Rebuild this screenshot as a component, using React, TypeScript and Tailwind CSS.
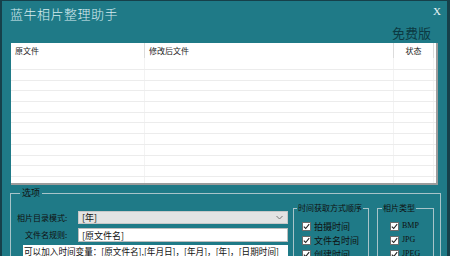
import React from 'react';

const rows = Array.from({ length: 12 });

const Check = () => (
  <span className="w-[9px] h-[9px] bg-white border border-[#6b6b6b] flex items-center justify-center shrink-0">
    <svg width="7" height="7" viewBox="0 0 7 7">
      <path d="M0.8 3.6 L2.7 5.5 L6.2 1.2" fill="none" stroke="#222" strokeWidth="1.1" />
    </svg>
  </span>
);

const CheckRow = ({ label, latin }: { label: string; latin?: boolean }) => (
  <div className="flex items-center gap-[3px] h-[14px] whitespace-nowrap">
    <Check />
    <span
      className={`text-[#101010] leading-none ${latin ? 'text-[8px]' : 'text-[9px]'}`}
      style={latin ? { fontFamily: '"Liberation Serif", serif' } : undefined}
    >
      {label}
    </span>
  </div>
);

const App: React.FC = () => {
  return (
    <div
      className="w-[450px] h-[256px] overflow-hidden bg-[#1f7a87] border-l-2 border-t border-r-[3px] border-[#16404a] flex flex-col"
      style={{ fontFamily: '"Noto Sans CJK SC", "Noto Sans", sans-serif' }}
    >
      {/* title bar */}
      <div className="h-[42px] flex justify-between shrink-0">
        <div className="pl-[8px] pt-[4px] text-[13px] leading-[18px] font-light text-[#d6ecf0] tracking-[0.5px]">
          蓝牛相片整理助手
        </div>
        <div className="flex flex-col items-end pr-[6px]">
          <span
            className="text-[11px] leading-none text-[#e8f4f6] pt-[5px]"
            style={{ fontFamily: '"Liberation Serif", serif' }}
          >
            X
          </span>
          <span className="text-[13px] leading-[16px] text-[#0c3a43] mt-[8px] pr-[10px]">免费版</span>
        </div>
      </div>

      {/* file table */}
      <div className="mx-[9px] h-[142px] bg-white border-r-2 border-b-2 border-[#9c9c9c] shrink-0 flex flex-col overflow-hidden text-[8px] text-[#222]">
        <div className="h-[15px] flex shrink-0">
          <div className="w-[134px] pl-[4px] flex items-center border-r border-[#dcdcdc]">原文件</div>
          <div className="w-[249px] pl-[4px] flex items-center border-r border-[#dcdcdc]">修改后文件</div>
          <div className="w-[40px] flex items-center justify-center border-r border-[#dcdcdc]">状态</div>
          <div className="flex-1" />
        </div>
        <div className="h-[11px] flex shrink-0">
          <div className="w-[134px] border-r border-[#f3f3f3]" />
          <div className="w-[249px] border-r border-[#f3f3f3]" />
          <div className="w-[40px] border-r border-[#f3f3f3]" />
        </div>
        {rows.map((_, i) => (
          <div key={i} className="h-[10.7px] flex shrink-0 border-t border-[#ececec]">
            <div className="w-[134px] border-r border-[#f3f3f3]" />
            <div className="w-[249px] border-r border-[#f3f3f3]" />
            <div className="w-[40px] border-r border-[#f3f3f3]" />
          </div>
        ))}
      </div>

      {/* options */}
      <fieldset className="mx-[8px] mt-[3px] border border-[#a8c4c9] px-[6px] flex-1">
        <legend className="text-[9px] leading-[10px] text-[#101010] px-[2px] ml-[3px]">选项</legend>
        <div className="flex">
          <div className="w-[271px] pt-[13px] flex flex-col text-[8px] text-[#101010] whitespace-nowrap">
            <div className="flex items-center h-[13px]">
              <span className="w-[61px] leading-none">相片目录模式:</span>
              <div className="flex-1 h-[13px] bg-[#e3e3e3] border border-[#c8c8c8] flex items-center justify-between pl-[3px] pr-[4px]">
                <span className="text-[9px] leading-none">[年]</span>
                <svg width="7" height="5" viewBox="0 0 7 5">
                  <path d="M0.5 1 L3.5 4 L6.5 1" fill="none" stroke="#777" strokeWidth="1" />
                </svg>
              </div>
            </div>
            <div className="flex items-center h-[14px] mt-[4px]">
              <span className="w-[61px] leading-none pl-[8px]">文件名规则:</span>
              <div className="flex-1 h-[14px] bg-white border border-[#bdbdbd] flex items-center pl-[3px]">
                <span className="text-[9px] leading-none">[原文件名]</span>
              </div>
            </div>
            <div className="flex items-center h-[13px] mt-[3px] ml-[6px] pl-[1px] bg-white text-[8.6px] leading-none overflow-hidden">
              可以加入时间变量：[原文件名],[年月日]，[年月]，[年]，[日期时间]
            </div>
          </div>
          <div className="flex gap-[8px] ml-[5px] mt-[5px]">
            <fieldset className="w-[76px] border border-[#a8c4c9] pl-[8px] pt-[6px]">
              <legend className="text-[8px] leading-[10px] text-[#101010] px-[1px] -ml-[5px] whitespace-nowrap">时间获取方式顺序</legend>
              <CheckRow label="拍摄时间" />
              <CheckRow label="文件名时间" />
              <CheckRow label="创建时间" />
            </fieldset>
            <fieldset className="w-[57px] border border-[#a8c4c9] pl-[12px] pt-[6px]">
              <legend className="text-[8px] leading-[10px] text-[#101010] px-[1px] -ml-[8px] whitespace-nowrap">相片类型</legend>
              <CheckRow label="BMP" latin />
              <CheckRow label="JPG" latin />
              <CheckRow label="JPEG" latin />
            </fieldset>
          </div>
        </div>
      </fieldset>
    </div>
  );
};

export default App;
